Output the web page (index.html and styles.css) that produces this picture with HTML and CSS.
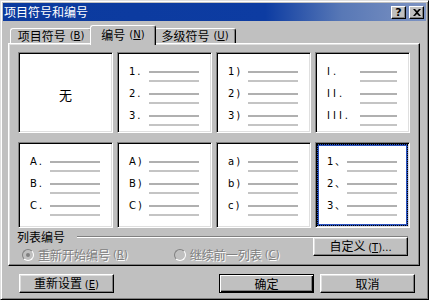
FILE: index.html
```html
<!DOCTYPE html>
<html lang="zh-CN">
<head>
  <meta charset="UTF-8" />
  <title>项目符号和编号</title>
  <link rel="stylesheet" href="styles.css">
</head>
<body>

<div class="window">
  <div class="titlebar">
    <span class="title">项目符号和编号</span>
    <div class="title-btns">
      <span class="tbtn help">?</span>
      <span class="tbtn close">
        <svg width="8" height="7" viewBox="0 0 8 7"><path d="M0 0h2l2 2 2-2h2L5 3.5 8 7H6L4 5 2 7H0l3-3.5z" fill="#000"/></svg>
      </span>
    </div>
  </div>

  <div class="tabs">
    <div class="tab t1"><span>项目符号</span><span class="key">(<u>B</u>)</span></div>
    <div class="tab active"><span>编号</span><span class="key">(<u>N</u>)</span></div>
    <div class="tab t3"><span>多级符号</span><span class="key">(<u>U</u>)</span></div>
  </div>

  <div class="panel">
    <div class="grid">
      <div class="item none">无</div>

      <div class="item">
        <div class="row"><span class="num">1.</span><span class="lines"><i></i><i></i></span></div>
        <div class="row"><span class="num">2.</span><span class="lines"><i></i><i></i></span></div>
        <div class="row"><span class="num">3.</span><span class="lines"><i></i><i></i></span></div>
      </div>

      <div class="item">
        <div class="row"><span class="num">1)</span><span class="lines"><i></i><i></i></span></div>
        <div class="row"><span class="num">2)</span><span class="lines"><i></i><i></i></span></div>
        <div class="row"><span class="num">3)</span><span class="lines"><i></i><i></i></span></div>
      </div>

      <div class="item roman">
        <div class="row"><span class="num">I.</span><span class="lines"><i></i><i></i></span></div>
        <div class="row"><span class="num">II.</span><span class="lines"><i></i><i></i></span></div>
        <div class="row"><span class="num">III.</span><span class="lines"><i></i><i></i></span></div>
      </div>

      <div class="item">
        <div class="row"><span class="num">A.</span><span class="lines"><i></i><i></i></span></div>
        <div class="row"><span class="num">B.</span><span class="lines"><i></i><i></i></span></div>
        <div class="row"><span class="num">C.</span><span class="lines"><i></i><i></i></span></div>
      </div>

      <div class="item">
        <div class="row"><span class="num">A)</span><span class="lines"><i></i><i></i></span></div>
        <div class="row"><span class="num">B)</span><span class="lines"><i></i><i></i></span></div>
        <div class="row"><span class="num">C)</span><span class="lines"><i></i><i></i></span></div>
      </div>

      <div class="item">
        <div class="row"><span class="num">a)</span><span class="lines"><i></i><i></i></span></div>
        <div class="row"><span class="num">b)</span><span class="lines"><i></i><i></i></span></div>
        <div class="row"><span class="num">c)</span><span class="lines"><i></i><i></i></span></div>
      </div>

      <div class="item selected">
        <div class="row"><span class="num">1、</span><span class="lines"><i></i><i></i></span></div>
        <div class="row"><span class="num">2、</span><span class="lines"><i></i><i></i></span></div>
        <div class="row"><span class="num">3、</span><span class="lines"><i></i><i></i></span></div>
      </div>
    </div>

    <div class="group-head">
      <span>列表编号</span>
      <i class="etch"></i>
    </div>

    <div class="options">
      <label class="radio r1"><span class="dot checked"></span><span>重新开始编号</span><span class="key">(<u>R</u>)</span></label>
      <label class="radio r2"><span class="dot"></span><span>继续前一列表</span><span class="key">(<u>C</u>)</span></label>
      <button class="btn custom">自定义 <span class="key">(<u>T</u>)...</span></button>
    </div>
  </div>

  <div class="footer">
    <button class="btn">重新设置 <span class="key">(<u>E</u>)</span></button>
    <span class="spacer"></span>
    <button class="btn default">确定</button>
    <button class="btn">取消</button>
  </div>
</div>

</body>
</html>
```

FILE: styles.css
```css
/* Ventana estilo Windows 98 */
* {
  box-sizing: border-box;
}
body {
  margin: 0;
  background: #c0c0c0;
  font-family: "Noto Sans CJK SC", "DejaVu Sans", sans-serif;
  font-size: 12px;
  color: #000;
}
.window {
  width: 429px;
  height: 300px;
  background: #c0c0c0;
  border: 1px solid;
  border-color: #dfdfdf #000 #000 #dfdfdf;
  box-shadow: inset 1px 1px #fff, inset -1px -1px #808080;
  padding: 2px;
}

/* Barra de título */
.titlebar {
  height: 18px;
  display: flex;
  align-items: center;
  justify-content: space-between;
  padding: 0 2px 0 1px;
  background: linear-gradient(90deg, #0b3a9e 0%, #0d3ca2 62%, #5878b6 80%, #7d93c2 100%);
  color: #fff;
}
.title {
  line-height: 14px;
}
.title-btns {
  display: flex;
  gap: 3px;
}
.tbtn {
  width: 15px;
  height: 13px;
  display: flex;
  align-items: center;
  justify-content: center;
  background: #c0c0c0;
  border: 1px solid;
  border-color: #fff #000 #000 #fff;
  box-shadow: inset -1px -1px #808080;
  color: #000;
  font-family: "DejaVu Sans", sans-serif;
  font-weight: bold;
  font-size: 11px;
  line-height: 11px;
}

/* Pestañas */
.tabs {
  display: flex;
  align-items: flex-end;
  height: 18px;
  margin: 4px 0 0 7px;
  position: relative;
  z-index: 1;
}
.tab {
  height: 15px;
  display: flex;
  align-items: center;
  justify-content: center;
  gap: 4px;
  border: 1px solid;
  border-bottom: none;
  border-color: #fff #000 #000 #fff;
  border-radius: 3px 3px 0 0;
  box-shadow: inset -1px 0 #808080;
  line-height: 12px;
  background: #c0c0c0;
}
.t1 { width: 82px; }
.t3 { width: 82px; }
.tab.active {
  width: 66px;
  height: 20px;
  margin: 0 -2px -2px;
  padding-bottom: 2px;
  z-index: 2;
}
.key {
  font-family: "DejaVu Sans", sans-serif;
  font-size: 10px;
}

/* Panel */
.panel {
  width: 412px;
  height: 223px;
  margin-left: 5px;
  border: 1px solid;
  border-color: #fff #000 #000 #fff;
  box-shadow: inset -1px -1px #808080, inset 1px 1px #dfdfdf;
  padding: 8px 8px 0 9px;
  display: flex;
  flex-direction: column;
}
.grid {
  display: grid;
  grid-template-columns: repeat(4, 95px);
  grid-template-rows: 81px 86px;
  column-gap: 4px;
  row-gap: 9px;
}
.item {
  background: #fff;
  border: 1px solid;
  border-color: #808080 #fff #fff #808080;
  box-shadow: inset 1px 1px #000, inset -1px -1px #dfdfdf;
  padding: 18px 0 0 11px;
  display: flex;
  flex-direction: column;
  gap: 11px;
}
.item.none {
  padding: 4px 0 0;
  align-items: center;
  justify-content: center;
  font-size: 13px;
}
.item.selected {
  box-shadow: inset 1px 1px #000, inset -1px -1px #dfdfdf, inset 0 0 0 3px #2a52be;
  outline: 1px dotted #000;
  outline-offset: -3px;
}
.row {
  display: flex;
  align-items: flex-start;
}
.num {
  width: 20px;
  height: 2px;
  line-height: 2px;
  font-family: "DejaVu Sans", sans-serif;
  font-size: 10px;
  letter-spacing: 2px;
  white-space: nowrap;
}
.roman .num {
  width: 33px;
  letter-spacing: 3px;
}
.roman .lines i {
  width: 37px;
}
.lines {
  display: flex;
  flex-direction: column;
  gap: 7px;
}
.lines i {
  display: block;
  width: 50px;
  height: 2px;
  background: #c4c4c4;
}
.lines i:first-child {
  background: #b0b0b0;
}

/* Grupo: lista */
.group-head {
  display: flex;
  align-items: center;
  margin: 2px 3px 0 -1px;
  height: 14px;
}
.group-head span {
  line-height: 12px;
}
.etch {
  flex: 1;
  height: 2px;
  margin-left: 12px;
  border-top: 1px solid #808080;
  border-bottom: 1px solid #fff;
}
.options {
  display: flex;
  align-items: center;
  height: 16px;
  margin-top: 3px;
}
.radio {
  display: flex;
  align-items: center;
  gap: 4px;
  color: #808080;
  text-shadow: 1px 1px #fff;
  line-height: 12px;
  white-space: nowrap;
}
.radio .key {
  margin-left: -1px;
}
.r1 {
  margin-left: 4px;
}
.r2 {
  margin-left: 46px;
}
.dot {
  width: 12px;
  height: 12px;
  border-radius: 50%;
  border: 1px solid;
  border-color: #808080 #fff #fff #808080;
  background: #c0c0c0;
  display: flex;
  align-items: center;
  justify-content: center;
}
.dot.checked::after {
  content: "";
  width: 4px;
  height: 4px;
  border-radius: 50%;
  background: #808080;
}

/* Botones */
.btn {
  width: 95px;
  height: 19px;
  padding: 0;
  font-family: "Noto Sans CJK SC", "DejaVu Sans", sans-serif;
  font-size: 12px;
  line-height: 12px;
  color: #000;
  background: #c0c0c0;
  border: 1px solid;
  border-color: #fff #000 #000 #fff;
  box-shadow: inset -1px -1px #808080, inset 1px 1px #dfdfdf;
}
.btn.default {
  border-color: #000;
  box-shadow: inset 1px 1px #fff, inset -1px -1px #000, inset -2px -2px #808080;
}
.custom {
  margin-left: auto;
  margin-right: 3px;
  align-self: flex-start;
  margin-top: -10px;
}
.footer {
  display: flex;
  align-items: center;
  gap: 6px;
  margin-top: 8px;
  padding: 0 11px 0 16px;
}
.spacer {
  flex: 1;
}
```
